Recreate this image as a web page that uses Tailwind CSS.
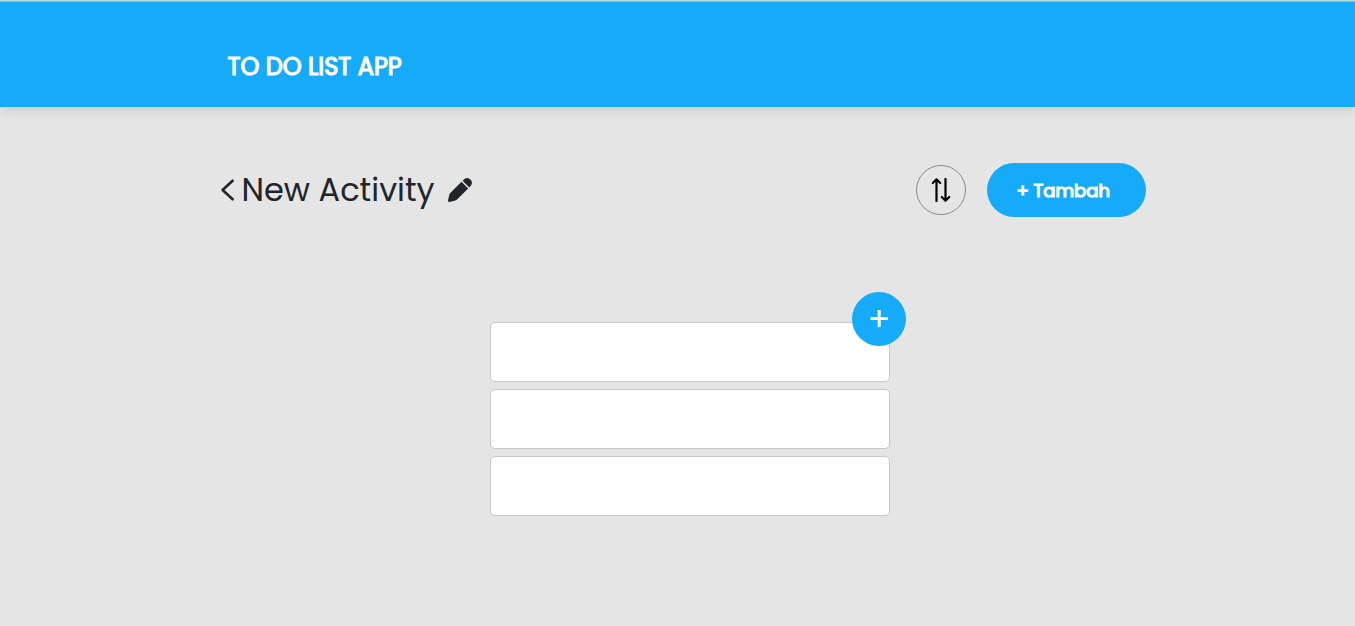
<!DOCTYPE html>
<html lang="id">
<head>
<meta charset="utf-8">
<title>To Do List App</title>
<script src="https://cdn.jsdelivr.net/npm/@tailwindcss/browser@4"></script>
</head>
<body class="min-h-screen bg-[#e5e5e5] font-['Poppins','Inter',sans-serif] text-[#212529]">
<header class="flex h-[107px] items-center border-t border-[#b5dcd9] bg-[#16abf8] pl-[227.5px] pt-[26px] shadow-[inset_0_1px_0_#7cc6e0,0_4px_10px_rgba(0,0,0,0.1)]">
  <h1 class="whitespace-nowrap text-[24px] leading-9 font-normal text-white [-webkit-text-stroke:1.2px_#fff]">TO DO LIST APP</h1>
</header>
<main class="ml-[220px] w-[926px] pt-[56px]">
  <div class="flex h-[54px] items-center">
    <svg class="h-6 w-4 shrink-0" viewBox="0 0 16 24" fill="none" stroke="#212529" stroke-width="2.7" stroke-linecap="round" stroke-linejoin="round"><path d="M12.6 2.8 2.6 12l10 9.2"/></svg>
    <h2 class="ml-[5.5px] w-[192.5px] whitespace-nowrap text-[32px] leading-10 font-normal">New Activity</h2>
    <svg class="ml-[14px] size-6 shrink-0" viewBox="0 0 24 24" fill="#212529"><path d="M13.500 3.800 20.200 10.500 8.500 21.900Q8 22.300 1.500 24Q0 24.200 0 22.500Q1.400 16 2 15.300ZM14.600 2.700l1.900-1.700Q19.600-1.200 22.400 1.600Q25.200 4.400 23 7.500l-1.700 1.900Z"/></svg>
    <button class="ml-auto flex size-[50px] items-center justify-center rounded-full border border-[#888]">
      <svg class="size-6" viewBox="0 0 24 24" fill="none" stroke="#000" stroke-width="2.2" stroke-linecap="round" stroke-linejoin="round"><path d="M7.500 23V1.500M3.800 5 7.500 1.300 11.200 5M16.500 1v21.500M12.800 19l3.700 3.700L20.200 19"/></svg>
    </button>
    <button class="ml-[21px] flex h-[54px] w-[159px] items-center rounded-full bg-[#16abf8] pl-[29.5px] text-[18px] font-normal text-white [-webkit-text-stroke:1.2px_#fff]">+ Tambah</button>
  </div>
  <section class="relative ml-[270px] mt-[105px] flex w-[400px] flex-col gap-[7px]">
    <div class="h-[60px] rounded-[5px] border border-[#c9c9c9] bg-white"></div>
    <div class="h-[60px] rounded-[5px] border border-[#c9c9c9] bg-white"></div>
    <div class="h-[60px] rounded-[5px] border border-[#c9c9c9] bg-white"></div>
    <button class="absolute -right-4 -top-[30px] flex size-[54px] items-center justify-center rounded-full bg-[#16abf8]" aria-label="Tambah">
      <svg class="size-[18px]" viewBox="0 0 18 18" stroke="#fff" stroke-width="3"><path d="M0.500 8.500h17.500M9.200 0v17"/></svg>
    </button>
  </section>
</main>
</body>
</html>
